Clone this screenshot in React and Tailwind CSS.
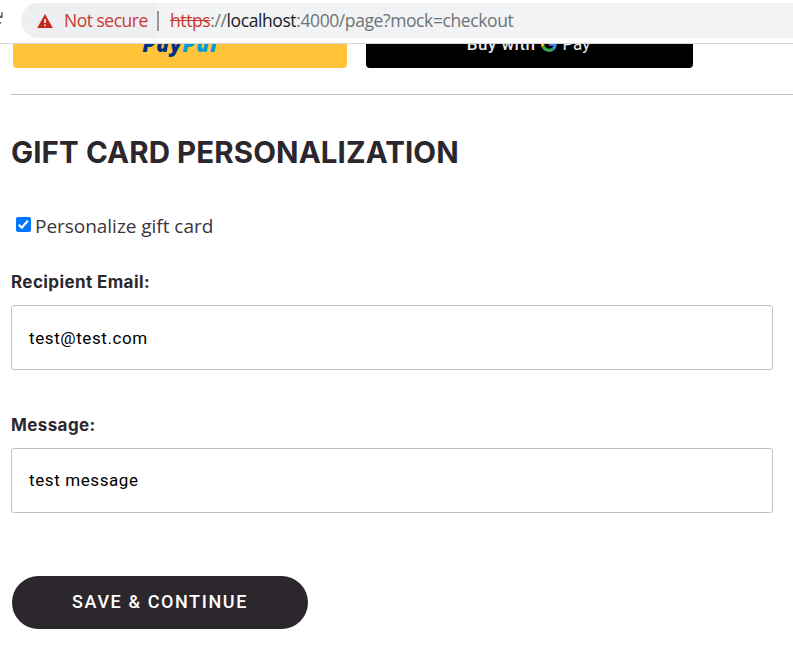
function AddressBar() {
  return (
    <header className="flex h-11 shrink-0 items-start border-b border-[#d6d7d9] bg-white pt-[3px] font-['Open_Sans','Noto_Sans',sans-serif]">
      <svg className="mt-2 h-5 w-[21px] shrink-0" viewBox="0 0 21 20">
        <path d="M2.700 1v6H0V5.200L1.300 4V1zM0 11h1.200v1.200L0 13z" fill="#5f6368" />
      </svg>
      <div className="flex h-[35px] flex-1 items-center rounded-l-full bg-[#f1f3f4]">
        <div className="flex h-[35px] w-[136px] shrink-0 items-center rounded-l-full bg-[#eeeff1] pl-4">
          <svg className="h-[14px] w-4 shrink-0" viewBox="0 0 16 14">
            <path d="M8 0l7.800 14H.2z" fill="#c5281c" />
            <path d="M7.200 5h1.600v4H7.200zM7.200 10.400h1.600V12H7.200z" fill="#fff" />
          </svg>
          <span className="ml-[11px] whitespace-nowrap text-[17.5px] leading-[35px] tracking-[-0.5px] text-[#c93a30]">Not secure</span>
        </div>
        <span className="h-5 w-0.5 shrink-0 bg-[#96999c]" />
        <span className="ml-[11px] whitespace-nowrap text-[17.5px] leading-[35px] tracking-[-0.4px] text-[#6f7377]">
          <span className="text-[#c93a30] line-through">https</span>://<span className="text-[#202124]">localhost</span>:4000/page?mock=checkout
        </span>
      </div>
    </header>
  );
}

function GoogleG() {
  return (
    <svg className="mr-[5px] ml-[6px] h-4 w-4" viewBox="0 0 48 48">
      <path fill="#EA4335" d="M24 9.5c3.500 0 6.700 1.200 9.200 3.600l6.900-6.900C35.900 2.400 30.500 0 24 0 14.600 0 6.500 5.400 2.600 13.200l8 6.200C12.400 13.700 17.700 9.500 24 9.500z" />
      <path fill="#4285F4" d="M47 24.600c0-1.600-.2-3.100-.4-4.600H24v9h12.900c-.6 3-2.300 5.500-4.800 7.200l7.700 6C44.400 38 47 31.800 47 24.600z" />
      <path fill="#FBBC05" d="M10.500 28.600A14.500 14.500 0 0 1 10.500 19.400l-8-6.200a24 24 0 0 0 0 21.600z" />
      <path fill="#34A853" d="M24 48c6.500 0 11.900-2.100 15.900-5.800l-7.700-6c-2.200 1.500-4.900 2.300-8.200 2.300-6.300 0-11.600-4.200-13.500-9.900l-8 6.200C6.500 42.600 14.600 48 24 48z" />
    </svg>
  );
}

function PaymentButtons() {
  return (
    <div className="flex h-[24px] items-end overflow-hidden pl-[2px]">
      <button className="flex h-12 w-[334px] shrink-0 items-center justify-center rounded-[4px] bg-[#ffc439] text-[21px] leading-6 font-extrabold italic tracking-[0.9px] font-['Open_Sans',sans-serif]">
        <span className="text-[#003087]">Pay</span>
        <span className="text-[#009cde]">Pal</span>
      </button>
      <button className="ml-[19px] flex h-12 w-[327px] shrink-0 items-center justify-center rounded-[4px] bg-black pr-[2px] text-[17px] leading-6 font-medium text-[#e8eaed] font-['Roboto',sans-serif]">
        <span className="tracking-[0.5px]">Buy with</span>
        <GoogleG />
        <span className="font-normal">Pay</span>
      </button>
    </div>
  );
}

function Field({ label, value, className, inputClassName }) {
  return (
    <div className={className}>
      <label className="block h-6 text-[17px] leading-6 font-bold tracking-[0.4px] whitespace-nowrap text-[#2c272d] font-['Inter','Roboto',sans-serif]">{label}</label>
      <input
        className={`mt-[11px] block h-[65px] w-[762px] rounded-[3px] border border-[#c0c0c0] bg-white px-[17px] text-[17px] tracking-[0.6px] text-black outline-none ${inputClassName}`}
        defaultValue={value}
      />
    </div>
  );
}

export default function App() {
  return (
    <div className="flex h-[646px] w-[793px] flex-col overflow-hidden bg-white font-['Roboto',sans-serif]">
      <AddressBar />
      <main className="flex flex-col items-start pl-[11px]">
        <PaymentButtons />
        <hr className="mt-[26px] w-full border-t border-[#c0c0c0]" />
        <h1 className="mt-[37px] whitespace-nowrap text-[29.5px] leading-10 font-bold tracking-[0.1px] text-[#2c272d] font-['Inter','Roboto',sans-serif]">GIFT CARD PERSONALIZATION</h1>
        <label className="mt-[39px] flex h-[30px] items-center pl-[5px] font-['Open_Sans','Noto_Sans',sans-serif]">
          <svg className="mb-[3px] h-[15px] w-[15px]" viewBox="0 0 15 15">
            <rect width="15" height="15" rx="2" fill="#0075ff" />
            <path d="M2.800 7.700l3 3 6-7" fill="none" stroke="#fff" strokeWidth="2.200" />
          </svg>
          <span className="ml-[4px] whitespace-nowrap text-[19px] tracking-[-0.03px] text-[#3a353b]">Personalize gift card</span>
        </label>
        <Field className="mt-[29px]" label="Recipient Email:" value="test@test.com" inputClassName="pb-0" />
        <Field className="mt-[43px]" label="Message:" value="test message" inputClassName="pb-[2px]" />
        <button className="mt-[63px] ml-px h-[53px] w-[296px] rounded-full bg-[#2c272d] pb-[2px] text-[18px] font-medium tracking-[1.6px] text-white">
          SAVE &amp; CONTINUE
        </button>
      </main>
    </div>
  );
}
